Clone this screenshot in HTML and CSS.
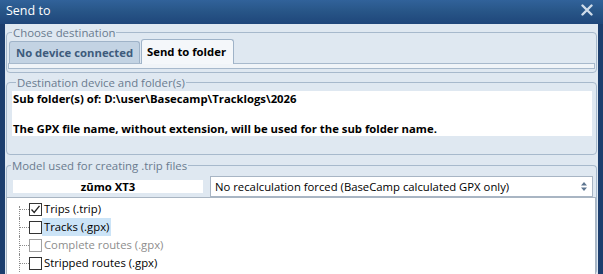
FILE: index.html
```html
<!DOCTYPE html>
<html>
<head>
<meta charset="utf-8">
<link rel="stylesheet" href="styles.css">
</head>
<body>
<div class="window">
  <div class="titlebar">
    <span class="title">Send to</span>
    <svg class="close" width="12" height="12" viewBox="0 0 12 12"><path d="M1.5 1.5 L10.5 10.5 M10.5 1.5 L1.5 10.5" stroke="#cfdcea" stroke-width="2.4" stroke-linecap="round"/></svg>
  </div>
  <div class="client">
    <fieldset class="group g1">
      <legend>Choose destination</legend>
      <div class="tabstrip">
        <div class="tab inactive">No device connected</div>
        <div class="tab active">Send to folder</div>
      </div>
      <div class="tabpage"></div>
    </fieldset>
    <fieldset class="group g2">
      <legend>Destination device and folder(s)</legend>
      <div class="info">
        <div class="line">Sub folder(s) of: D:\user\Basecamp\Tracklogs\2026</div>
        <div class="line"></div>
        <div class="line">The GPX file name, without extension, will be used for the sub folder name.</div>
      </div>
    </fieldset>
    <fieldset class="group g3">
      <legend>Model used for creating .trip files</legend>
      <div class="modelrow">
        <div class="model">zūmo XT3</div>
        <div class="combo">
          <span class="combotext">No recalculation forced (BaseCamp calculated GPX only)</span>
          <svg class="spin" width="8" height="11" viewBox="0 0 8 11"><path d="M4 1 L7 4.5 L1 4.5 Z M1 6.5 L7 6.5 L4 10 Z" fill="#5d7590"/></svg>
        </div>
      </div>
      <div class="tree">
        <div class="item first"><span class="cb checked"><svg width="11" height="11" viewBox="0 0 11 11"><path d="M1.5 5.5 L4.2 8.5 L9.5 1.8" fill="none" stroke="#222" stroke-width="1.3"/></svg></span><span class="label">Trips (.trip)</span></div>
        <div class="item"><span class="cb"></span><span class="label sel">Tracks (.gpx)</span></div>
        <div class="item"><span class="cb disabled"></span><span class="label dis">Complete routes (.gpx)</span></div>
        <div class="item last"><span class="cb"></span><span class="label">Stripped routes (.gpx)</span></div>
      </div>
    </fieldset>
  </div>
</div>
</body>
</html>
```
FILE: styles.css
```css
html, body {
  margin: 0;
  padding: 0;
  width: 603px;
  height: 274px;
  overflow: hidden;
  font-family: "Open Sans", "Noto Sans", sans-serif;
  font-size: 11.3px;
}
.window {
  width: 603px;
  height: 274px;
  background: #1c3e6e;
  display: flex;
  flex-direction: column;
}
.titlebar {
  height: 24px;
  flex: none;
  display: flex;
  align-items: center;
  justify-content: space-between;
  padding: 0 10px 0 6px;
  background: linear-gradient(to bottom, #31629a 0%, #285688 45%, #1f467a 100%);
}
.title {
  color: #ffffff;
  font-size: 12.5px;
  line-height: 16px;
  margin-top: -3px;
}
.close {
  margin-top: -4px;
}
.client {
  flex: 1;
  margin: 0 5px 0 5px;
  background: #dfe8f1;
  display: flex;
  flex-direction: column;
  overflow: hidden;
}
.group {
  margin: 0 1px;
  padding: 0 1px;
  border: 1px solid #a7b9cc;
  border-radius: 4px;
  min-width: 0;
}
.group legend {
  padding: 0 1px;
  margin-left: 4px;
  color: #6a7b8f;
  line-height: 15px;
  font-size: 11.4px;
}
.g1 {
  margin-top: 1px;
  padding-bottom: 3px;
}
.tabstrip {
  display: flex;
  align-items: flex-end;
  height: 23px;
  border-bottom: 1px solid #a7b9cc;
  padding-left: 1px;
}
.tab {
  font-weight: bold;
  border: 1px solid #9fb3c8;
  border-bottom: none;
  border-radius: 3px 3px 0 0;
  display: flex;
  align-items: center;
}
.tab.inactive {
  height: 21px;
  padding: 0 4px 0 6px;
  background: #c3d3e3;
  color: #3e5b7c;
  width: 119px;
}
.tab.active {
  height: 23px;
  margin-left: 1px;
  margin-bottom: -1px;
  padding: 0 6px 1px 5px;
  background: #f4f7fa;
  color: #000;
  width: 80px;
}
.tabpage {
  height: 4px;
  background: #f0f4f8;
  border: 1px solid #a7b9cc;
  border-top: none;
}
.g2 {
  margin-top: 2px;
  padding: 1px 4px 18px 5px;
}
.info {
  background: #ffffff;
  padding: 0 0 0 1px;
  font-weight: bold;
}
.info .line {
  height: 15px;
  line-height: 15px;
  white-space: nowrap;
}
.g3 {
  margin-top: 3px;
  padding: 0;
  flex: 1;
  display: flex;
  flex-direction: column;
  border-bottom: none;
}
.modelrow {
  display: flex;
  align-items: center;
  padding: 2px 3px 0 6px;
  height: 22px;
}
.model {
  width: 190px;
  height: 13px;
  line-height: 13px;
  background: #ffffff;
  font-weight: bold;
  text-align: center;
}
.combo {
  margin-left: 7px;
  flex: 1;
  height: 19px;
  background: #ffffff;
  border: 1px solid #a8b5c4;
  display: flex;
  align-items: center;
  justify-content: space-between;
  padding: 0 4px 0 4px;
}
.tree {
  flex: 1;
  background: #ffffff;
  border: 1px solid #a9b5c2;
  border-bottom: none;
  margin: 0 0 0 -1px;
  padding-top: 2px;
}
.item {
  height: 18px;
  display: flex;
  align-items: center;
  position: relative;
  padding-left: 22px;
}
.item::before {
  content: "";
  position: absolute;
  left: 12px;
  top: 0;
  bottom: 0;
  border-left: 1px dotted #8a8a8a;
}
.item.first::before {
  top: 6px;
}
.item::after {
  content: "";
  position: absolute;
  left: 13px;
  width: 9px;
  top: 9px;
  border-top: 1px dotted #8a8a8a;
}
.cb {
  width: 11px;
  height: 11px;
  border: 1px solid #333333;
  background: #fff;
  display: inline-flex;
  flex: none;
}
.cb.disabled {
  border-color: #a0a0a0;
}
.label {
  margin-left: 0;
  padding: 0 2px 0 2px;
  height: 18px;
  line-height: 18px;
  color: #000;
}
.label.sel {
  background: #cce4f7;
}
.label.dis {
  color: #8d8d8d;
}
```
